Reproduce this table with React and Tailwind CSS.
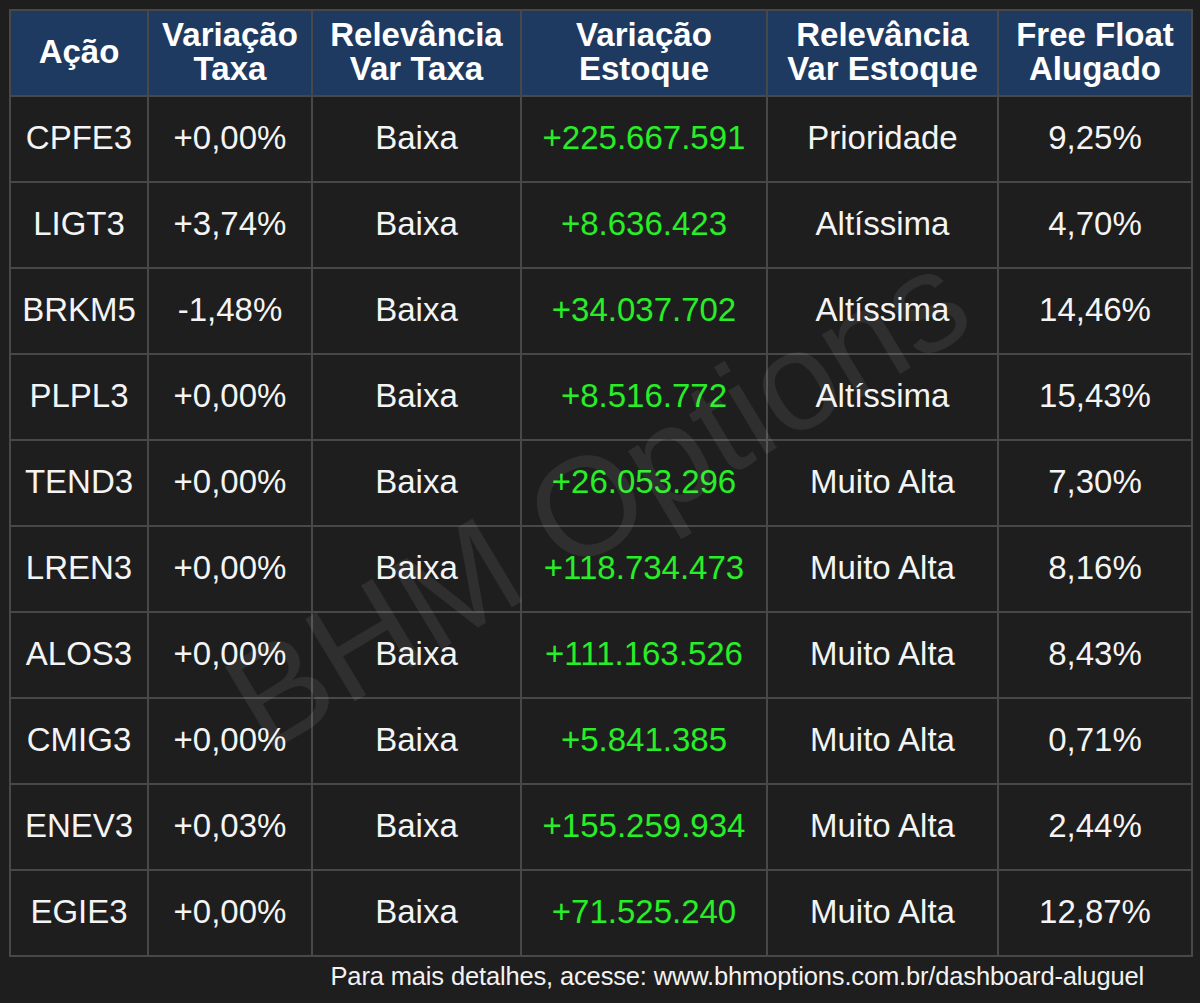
import React from "react";

const rows = [
  ["CPFE3", "+0,00%", "Baixa", "+225.667.591", "Prioridade", "9,25%"],
  ["LIGT3", "+3,74%", "Baixa", "+8.636.423", "Altíssima", "4,70%"],
  ["BRKM5", "-1,48%", "Baixa", "+34.037.702", "Altíssima", "14,46%"],
  ["PLPL3", "+0,00%", "Baixa", "+8.516.772", "Altíssima", "15,43%"],
  ["TEND3", "+0,00%", "Baixa", "+26.053.296", "Muito Alta", "7,30%"],
  ["LREN3", "+0,00%", "Baixa", "+118.734.473", "Muito Alta", "8,16%"],
  ["ALOS3", "+0,00%", "Baixa", "+111.163.526", "Muito Alta", "8,43%"],
  ["CMIG3", "+0,00%", "Baixa", "+5.841.385", "Muito Alta", "0,71%"],
  ["ENEV3", "+0,03%", "Baixa", "+155.259.934", "Muito Alta", "2,44%"],
  ["EGIE3", "+0,00%", "Baixa", "+71.525.240", "Muito Alta", "12,87%"],
];

const headers = [
  ["Ação"],
  ["Variação", "Taxa"],
  ["Relevância", "Var Taxa"],
  ["Variação", "Estoque"],
  ["Relevância", "Var Estoque"],
  ["Free Float", "Alugado"],
];

export default function App() {
  return (
    <div
      className="relative w-[1200px] h-[1003px] bg-[#1e1e1e] overflow-hidden"
      style={{ fontFamily: '"Liberation Sans", Arial, sans-serif' }}
    >
      <div className="pt-[9px] pl-[9px]">
        <table className="table-fixed border-collapse w-[1182px]">
          <colgroup>
            <col className="w-[138px]" />
            <col className="w-[164px]" />
            <col className="w-[209px]" />
            <col className="w-[246px]" />
            <col className="w-[231px]" />
            <col className="w-[194px]" />
          </colgroup>
          <thead>
            <tr className="h-[86px] bg-[#1f3a60]">
              {headers.map((h, i) => (
                <th
                  key={i}
                  className="border-2 border-[#484848] text-white font-bold text-[33px] leading-[34px] text-center align-middle p-0 pb-[2px]"
                >
                  {h.map((l, j) => (
                    <div key={j}>{l}</div>
                  ))}
                </th>
              ))}
            </tr>
          </thead>
          <tbody>
            {rows.map((r, i) => (
              <tr key={i} className="h-[86px]">
                {r.map((c, j) => (
                  <td
                    key={j}
                    className={
                      "border-2 border-[#484848] text-[33px] leading-none text-center align-middle p-0 pb-[4px] " +
                      (j === 3 ? "text-[#28ee28]" : "text-[#f4f4f4]")
                    }
                  >
                    {c}
                  </td>
                ))}
              </tr>
            ))}
          </tbody>
        </table>
      </div>
      <div className="flex justify-end pr-[56px] pt-[4px]">
        <span className="text-[25.5px] leading-[30px] text-[#f2f2f2] tracking-[-0.15px]">
          Para mais detalhes, acesse: www.bhmoptions.com.br/dashboard-aluguel
        </span>
      </div>
      <div className="pointer-events-none absolute left-[597px] top-[500px] w-0 h-0">
        <div className="absolute -translate-x-1/2 -translate-y-1/2 -rotate-[31deg] whitespace-nowrap text-[140px] leading-none text-white/[0.08]">
          BHM Options
        </div>
      </div>
    </div>
  );
}
